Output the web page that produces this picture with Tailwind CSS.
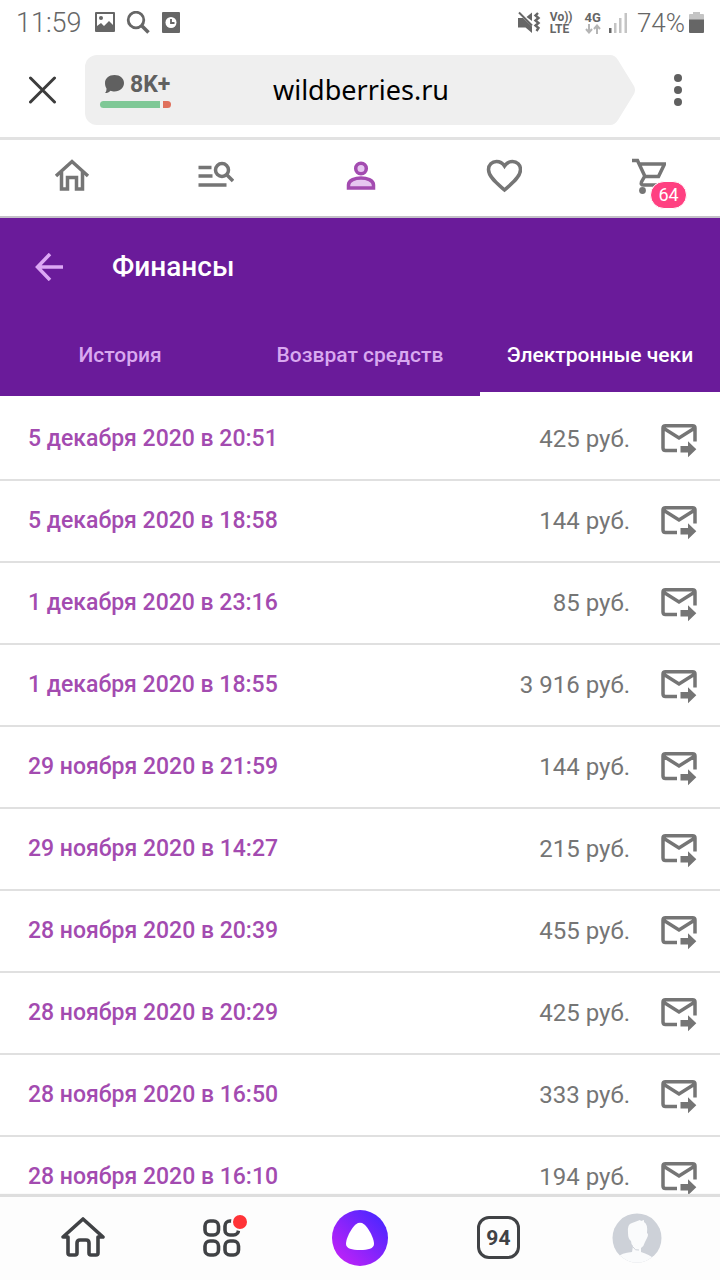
<!DOCTYPE html>
<html lang="ru">
<head>
  <meta charset="utf-8"/>
  <meta name="viewport" content="width=device-width, initial-scale=1.0"/>
  <title>Финансы</title>
  <script src="https://cdn.jsdelivr.net/npm/@tailwindcss/browser@4"></script>
</head>
<body class="h-screen flex flex-col overflow-hidden bg-white font-[Roboto,sans-serif] text-[#757575]">

  <!-- Строка состояния -->
  <div class="h-[46px] shrink-0 pl-4 pr-4 flex items-center justify-between text-[#666]">
    <div class="flex items-center">
      <span class="text-[27px] leading-8 font-light">11:59</span>
      <svg class="ml-3 w-[22px] h-[22px]" viewBox="0 0 22 22" fill="currentColor"><path fill-rule="evenodd" d="M2 0h18a1 1 0 0 1 1 1v18a1 1 0 0 1-1 1H2a1 1 0 0 1-1-1V1a1 1 0 0 1 1-1zM3 2v12l4-3 3 3 5-5 4 4V2z"/><circle cx="7" cy="6" r="2"/></svg>
      <svg class="ml-2.5 w-6 h-6" viewBox="0 0 24 24" fill="none" stroke="currentColor"><circle cx="10" cy="9" r="7.8" stroke-width="2.8"/><path d="M15.5 14.5l7 7" stroke-width="3.6"/></svg>
      <svg class="ml-3 w-[18px] h-[22px]" viewBox="0 0 18 22"><rect width="18" height="21" rx="1" fill="currentColor"/><circle cx="9" cy="10.500" r="5.500" fill="#fff"/><path d="M9 7v4h3.500" fill="none" stroke="currentColor" stroke-width="1.800"/></svg>
    </div>
    <div class="flex items-center">
      <svg class="w-6 h-6" viewBox="0 0 24 24" fill="currentColor"><path d="M0 7h5l9 8.500V22l-6.500-5.500H0zM8.500 6L14 1.500V10z"/><path d="M1 1.500L14 14.500" stroke="currentColor" stroke-width="2"/><path d="M20 2l-2.500 2.500L20.500 7l-3 2.500L20.500 12l-3 2.500 3 2.500-2 3" fill="none" stroke="currentColor" stroke-width="2.400"/></svg>
      <div class="ml-2 flex flex-col text-[12px] leading-[12px] font-bold"><span>Vo))</span><span>LTE</span></div>
      <div class="ml-3 flex flex-col items-center text-[13px] leading-[12px] font-bold">
        <span>4G</span>
        <svg class="w-4 h-[10px]" viewBox="0 0 16 10" fill="none" stroke="#b5b5b5" stroke-width="2"><path d="M4 0v8M1 5l3 3.500L7 5M12 10V2M9 5l3-3.500L15 5"/></svg>
      </div>
      <svg class="ml-2 w-[18px] h-5" viewBox="0 0 18 20" fill="#c4c4c4"><rect y="15" width="2.500" height="5" fill="#666"/><rect x="5" y="10" width="2.500" height="10"/><rect x="10" y="5" width="2.500" height="15"/><rect x="15.500" width="2.500" height="20"/></svg>
      <span class="ml-2.5 text-[26px] leading-8 font-light">74%</span>
      <svg class="ml-1 w-[15px] h-[22px]" viewBox="0 0 15 22"><path d="M4 0h7v2h3q1 0 1 1v5H0V3q0-1 1-1h3z" fill="#c4c4c4"/><path d="M0 7.500h15V20q0 1-1 1H1q-1 0-1-1z" fill="#666"/></svg>
    </div>
  </div>

  <!-- Адресная строка браузера -->
  <div class="h-[94px] shrink-0 flex items-center pb-1 border-b-3 border-[#e2e2e2]">
    <button class="w-[85px] flex justify-center" aria-label="Закрыть">
      <svg class="w-7 h-7" viewBox="0 0 28 28" fill="none" stroke="#3c3c3c" stroke-width="3" stroke-linecap="round"><path d="M1.500 2l24 24M25.500 2l-24 24"/></svg>
    </button>
    <div class="flex-1 flex h-[70px]">
      <div class="flex-1 grid grid-cols-[1fr_auto_1fr] items-center bg-[#efefef] rounded-l-xl pl-[15px]">
        <div>
          <div class="flex items-center gap-1.5 pl-1 text-[#606060]">
            <svg class="w-5 h-5" viewBox="0 0 20 20" fill="currentColor"><path d="M10.500 0C16 0 20 3.500 20 8s-4 8.500-9.500 8.500c-1.500 0-3-.3-4-.8-1.500 1.500-3 2.300-5.500 2.300 1-1 1.500-2.500 1.500-4.500C1.500 12 1 10 1 8c0-4.500 4-8 9.500-8z"/></svg>
            <span class="text-[23px] leading-7 font-bold">8K+</span>
          </div>
          <div class="mt-0.5 flex gap-[3px]">
            <span class="w-[60px] h-[7px] rounded-l-full bg-[#7fc896]"></span>
            <span class="w-2 h-[7px] rounded-r-full bg-[#e0705c]"></span>
          </div>
        </div>
        <span class="pl-3 text-[27px] leading-9 text-black font-['Noto_Sans',sans-serif]">wildberries.ru</span>
      </div>
      <svg class="w-[25px] h-[70px]" viewBox="0 0 25 70" fill="#efefef"><path d="M0 0q5 0 8 5l16 26q2 4 0 8L8 65q-3 5-8 5z"/></svg>
    </div>
    <button class="w-[85px] flex justify-center" aria-label="Меню">
      <svg class="w-2 h-8" viewBox="0 0 8 32" fill="#606060"><circle cx="4" cy="4" r="4"/><circle cx="4" cy="16" r="4"/><circle cx="4" cy="28" r="4"/></svg>
    </button>
  </div>

  <!-- Навигация сайта -->
  <nav class="h-[78px] shrink-0 grid grid-cols-5 items-center justify-items-center pb-1 border-b-2 border-[#c4c0c8]">
    <a href="#" aria-label="Главная">
      <svg class="w-9 h-9" viewBox="0 0 36 36" fill="none" stroke="currentColor" stroke-width="3.500"><path d="M2 18L18 3.500 34 18"/><path d="M7.500 14v17h6V19.500h9V31h6V14"/></svg>
    </a>
    <a href="#" aria-label="Каталог">
      <svg class="w-9 h-9" viewBox="0 0 36 36" fill="none" stroke="currentColor" stroke-width="3.500"><path d="M0.500 9.500h13M0.500 18h14M0.500 27h28"/><circle cx="24" cy="12" r="6.500"/><path d="M28.500 16.500l6.500 6.500"/></svg>
    </a>
    <a href="#" aria-label="Профиль">
      <svg class="w-9 h-9" viewBox="0 0 36 36" fill="#e6c6f0" stroke="#a34bb0" stroke-width="3.500"><circle cx="19" cy="10.500" r="5.300"/><path d="M6.500 30V27c0-5 7-7 12.500-7s12.500 2 12.500 7v3z"/></svg>
    </a>
    <a href="#" aria-label="Избранное">
      <svg class="w-9 h-9" viewBox="0 0 36 36" fill="none" stroke="currentColor" stroke-width="3.500"><path d="M18.500 32C12.500 26.500 2.500 19.500 2.500 11.500c0-4.500 3.500-8 8-8 3 0 6 1.500 8 4.500 2-3 5-4.500 8-4.500 4.500 0 8 3.500 8 8 0 8-10 15-16 20.500z"/></svg>
    </a>
    <a href="#" aria-label="Корзина" class="relative">
      <svg class="w-9 h-9" viewBox="-2 0 36 36" fill="none" stroke="currentColor" stroke-width="3.500"><path d="M0 2.500h5.500l7.500 16H26.500L32.500 6H7.500"/><path d="M12.500 18.500L9.500 24q-1 3 2 3H29"/><circle cx="10.500" cy="32.500" r="3.400" fill="currentColor" stroke="none"/></svg>
      <span class="absolute left-5 top-[23px] w-[37px] h-7 rounded-full border border-white bg-[#ff4081] text-white text-[18px] leading-[26px] text-center">64</span>
    </a>
  </nav>

  <!-- Заголовок и вкладки -->
  <header class="shrink-0 bg-[#6a1b9a] text-white">
    <div class="h-[98px] flex items-center pl-[34px] gap-[48px]">
      <button aria-label="Назад">
        <svg class="w-[30px] h-7" viewBox="0 0 30 28" fill="none" stroke="#dca8f5" stroke-width="3.500"><path d="M29 14H4M16 1L3.500 14 16 27"/></svg>
      </button>
      <h1 class="text-[28px] leading-8 font-medium">Финансы</h1>
    </div>
    <div class="h-20 grid grid-cols-3 text-[21px] leading-7 font-medium">
      <button class="pt-0.5 border-b-4 border-transparent text-[#d9a9f0]">История</button>
      <button class="pt-0.5 border-b-4 border-transparent text-[#d9a9f0]">Возврат средств</button>
      <button class="pt-0.5 border-b-4 border-white">Электронные чеки</button>
    </div>
  </header>

  <!-- Список чеков -->
  <main class="flex-1 min-h-0 overflow-y-auto pt-[3px] [scrollbar-width:none]">
    <table class="w-full border-separate border-spacing-0">
      <tbody id="receipts"></tbody>
    </table>
  </main>

  <!-- Нижняя панель браузера -->
  <nav class="relative h-[83px] shrink-0 px-3.5 pb-0.5 grid grid-cols-5 items-center justify-items-center bg-[#fdfdfd] shadow-[0_-3px_1px_#dedede] text-[#404245]">
    <a href="#" aria-label="Домой">
      <svg class="w-[46px] h-[42px]" viewBox="0 0 46 42" fill="none" stroke="currentColor" stroke-width="3.600" stroke-linejoin="round" stroke-linecap="round"><path d="M8 20H3L23 2l20 18h-5v16q0 2-2 2h-5q-2 0-2-2V26q0-3-3-3h-6q-3 0-3 3v10q0 2-2 2h-5q-2 0-2-2z"/></svg>
    </a>
    <button class="relative" aria-label="Сервисы">
      <svg class="w-[38px] h-[38px]" viewBox="0 0 38 38" fill="none" stroke="currentColor" stroke-width="3.600"><rect x="2" y="2" width="13.500" height="14" rx="5"/><rect x="22" y="2" width="13.500" height="14" rx="5"/><rect x="2" y="22" width="13.500" height="14" rx="5"/><rect x="22" y="22" width="13.500" height="14" rx="5"/></svg>
      <span class="absolute -right-2 -top-1.5 w-[18px] h-[18px] rounded-full border-2 border-[#fdfdfd] bg-[#ff3337]"></span>
    </button>
    <button aria-label="Алиса">
      <svg class="w-14 h-14" viewBox="0 0 56 56">
        <defs><linearGradient id="alice" x1="0.850" y1="0.150" x2="0.150" y2="0.850"><stop offset="0" stop-color="#5226ff"/><stop offset="1" stop-color="#b822f8"/></linearGradient></defs>
        <circle cx="28" cy="28" r="28" fill="url(#alice)"/>
        <path d="M28 12.700c3 0 5 2 7.500 5.300C39 23 42 29.500 42 34c0 4.500-6 6-14 6s-14-1.500-14-6c0-4.500 3-11 6.500-16 2.500-3.300 4.500-5.300 7.500-5.300z" fill="#fff"/>
      </svg>
    </button>
    <button class="w-[43px] h-[43px] rounded-xl border-3 border-current text-[21px] leading-5 font-bold">94</button>
    <button aria-label="Аккаунт">
      <svg class="w-[50px] h-[50px]" viewBox="0 0 50 50">
        <clipPath id="avatar"><circle cx="25" cy="25" r="24.500"/></clipPath>
        <g clip-path="url(#avatar)"><rect width="50" height="50" fill="#cdd1d8"/><path d="M16 20q-1-9 4-10l8-3 1 1 3-1 0 2q4 2 3 11 2 1 0 5l-2 4q-1 4-4 6v4q9 3 12 6v5H6v-6q3-4 14-5l1-6q-2-2-2-5-3-2-3-8z" fill="#fafbfc"/><path d="M21 34q2 4 6 3" fill="none" stroke="#cdd1d8"/></g>
      </svg>
    </button>
  </nav>

  <script>
    const receipts = [
      ['5 декабря 2020 в 20:51', '425 руб.'],
      ['5 декабря 2020 в 18:58', '144 руб.'],
      ['1 декабря 2020 в 23:16', '85 руб.'],
      ['1 декабря 2020 в 18:55', '3 916 руб.'],
      ['29 ноября 2020 в 21:59', '144 руб.'],
      ['29 ноября 2020 в 14:27', '215 руб.'],
      ['28 ноября 2020 в 20:39', '455 руб.'],
      ['28 ноября 2020 в 20:29', '425 руб.'],
      ['28 ноября 2020 в 16:50', '333 руб.'],
      ['28 ноября 2020 в 16:10', '194 руб.'],
    ];

    // Строка таблицы: дата, сумма, отправка чека на почту
    document.getElementById('receipts').innerHTML = receipts.map(([date, sum]) => `
      <tr class="h-[82px]">
        <td class="border-b-2 border-[#e0e0e0] pl-7"><a href="#" class="text-[23px] leading-7 font-medium text-[#a34bb0]">${date}</a></td>
        <td class="border-b-2 border-[#e0e0e0] text-right text-[24px] leading-7">${sum}</td>
        <td class="border-b-2 border-[#e0e0e0] w-[90px] pr-[23px] pt-1">
          <button class="ml-auto block" aria-label="Отправить на почту">
            <svg class="w-9 h-[34px]" viewBox="0 0 36 34" fill="none" stroke="currentColor" stroke-width="3.500"><path d="M16 26.500H4.500Q2 26.500 2 24V4Q2 1.800 4.500 1.800h27Q34 1.800 34 4v13.500M3 4.500L18 14 33 4.500"/><path d="M19.500 22H27v-4.800l8.300 8-8.300 8v-4.700h-7.500z" fill="currentColor" stroke="none"/></svg>
          </button>
        </td>
      </tr>`).join('');
  </script>
</body>
</html>
